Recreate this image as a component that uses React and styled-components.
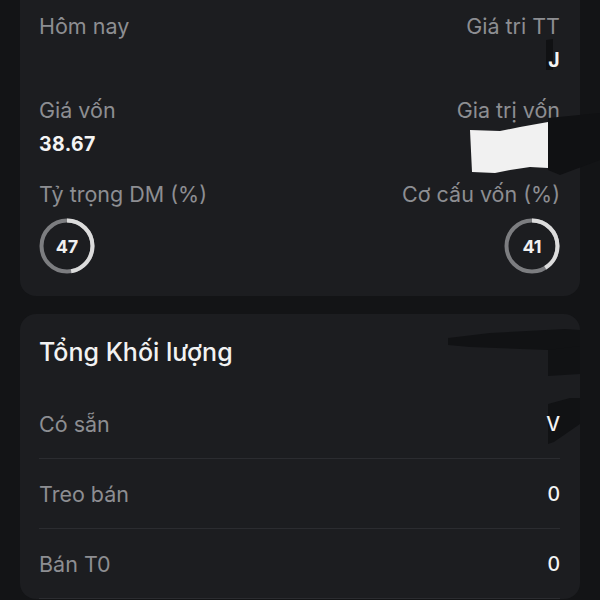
import styled, { createGlobalStyle } from "styled-components";

const GlobalStyle = createGlobalStyle`
  html, body {
    margin: 0;
    padding: 0;
    background: #131416;
    font-family: Inter, "Noto Sans", sans-serif;
    overflow: hidden;
  }
`;

const Page = styled.div`
  display: flex;
  flex-direction: column;
  gap: 18px;
  padding: 0 20px;
  margin-top: -24px;
  height: 624px;
`;

const Card = styled.div`
  position: relative;
  background: #1c1d20;
  border-radius: 16px;
  padding: ${(p) => p.$pad};
`;

const Grid = styled.div`
  display: grid;
  grid-template-columns: 1fr 1fr;
  row-gap: 21px;
`;

const Cell = styled.div`
  display: flex;
  flex-direction: column;
  align-items: ${(p) => (p.$right ? "flex-end" : "flex-start")};
`;

const Label = styled.div`
  font-size: 21.5px;
  line-height: 28px;
  color: #8d8e92;
`;

const Value = styled.div`
  position: relative;
  z-index: 2;
  margin-top: 5px;
  font-size: 19.5px;
  line-height: 30px;
  height: 30px;
  font-weight: 700;
  color: #f4f4f4;
  letter-spacing: 0.4px;
`;

const GaugeBox = styled.div`
  position: relative;
  margin-top: 10px;
  width: 56px;
  height: 56px;
  display: flex;
  align-items: center;
  justify-content: center;
  svg {
    position: absolute;
    inset: 0;
  }
`;

const GaugeText = styled.span`
  position: relative;
  font-size: 18px;
  font-weight: 700;
  color: #f0f0f0;
`;

const Overlay = styled.svg`
  position: absolute;
  left: 0;
  top: 0;
  z-index: 1;
  overflow: visible;
  pointer-events: none;
`;

const Title = styled.div`
  font-size: 25px;
  line-height: 30px;
  font-weight: 500;
  color: #f2f2f2;
  margin-bottom: 22px;
`;

const Row = styled.div`
  display: flex;
  align-items: center;
  justify-content: space-between;
  height: 69px;
  border-bottom: 1px solid #2b2c30;
`;

const RowValue = styled.span`
  position: relative;
  z-index: 2;
  font-size: 19.5px;
  font-weight: 500;
  color: #f4f4f4;
`;

const Gauge = ({ value }) => {
  const r = 25.5;
  const c = 2 * Math.PI * r;
  return (
    <GaugeBox>
      <svg width="56" height="56" viewBox="0 0 56 56">
        <circle cx="28" cy="28" r={r} fill="none" stroke="#7c7d80" strokeWidth="4" />
        <circle
          cx="28"
          cy="28"
          r={r}
          fill="none"
          stroke="#dcdcdc"
          strokeWidth="4"
          strokeDasharray={`${(c * value) / 100} ${c}`}
          transform="rotate(-90 28 28)"
        />
      </svg>
      <GaugeText>{value}</GaugeText>
    </GaugeBox>
  );
};

const rows = [
  { label: "Có sẵn", value: "V" },
  { label: "Treo bán", value: "0" },
  { label: "Bán T0", value: "0" },
];

export default function App() {
  return (
    <>
      <GlobalStyle />
      <Page>
        <Card $pad="36px 20px 22px 19px">
          <Grid>
            <Cell>
              <Label>Hôm nay</Label>
            </Cell>
            <Cell $right>
              <Label>Giá tri TT</Label>
              <Value>J</Value>
            </Cell>
            <Cell>
              <Label>Giá vốn</Label>
              <Value>38.67</Value>
            </Cell>
            <Cell $right>
              <Label>Gia trị vốn</Label>
              <Value />
            </Cell>
            <Cell>
              <Label>Tỷ trọng DM (%)</Label>
              <Gauge value={47} />
            </Cell>
            <Cell $right>
              <Label>Cơ cấu vốn (%)</Label>
              <Gauge value={41} />
            </Cell>
          </Grid>
          <Overlay width="580" height="320">
            <polygon points="526,64 533,63 533,94 526,94" fill="#101113" />
            <polygon points="528,142 580,137 580,184 540,199 528,194" fill="#101113" />
            <polygon
              points="450,154 480,155 500,151 528,146 528,192 510,191 490,194 475,197 452,196"
              fill="#f1f1f1"
            />
          </Overlay>
        </Card>
        <Card $pad="23px 20px 0 19px">
          <Title>Tổng Khối lượng</Title>
          {rows.map((r) => (
            <Row key={r.label}>
              <Label>{r.label}</Label>
              <RowValue>{r.value}</RowValue>
            </Row>
          ))}
          <Overlay width="560" height="200">
            <polygon points="428,24 470,19 545,15 560,16 560,34 540,37 528,36 450,33 428,31" fill="#111214" />
            <polygon points="528,36 560,32 560,60 528,62" fill="#111214" />
            <polygon points="528,90 550,84 560,84 560,110 534,128 528,130" fill="#111214" />
          </Overlay>
        </Card>
      </Page>
    </>
  );
}
